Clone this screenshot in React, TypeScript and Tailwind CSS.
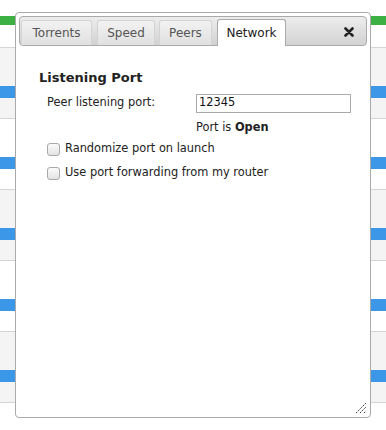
import React from 'react';

const rows = [0, 1, 2, 3, 4, 5];

function Background() {
  return (
    <div className="absolute inset-0 bg-white">
      <div className="h-[16px]" />
      <div className="h-[9px] bg-[#3cb043]" />
      <div className="h-[22px]" />
      {rows.map((i) => (
        <div
          key={i}
          className={`relative h-[71px] border-t border-[#d4d4d4] ${i % 2 === 0 ? 'bg-[#f4f4f4]' : 'bg-white'}`}
        >
          <div className="absolute left-0 right-0 top-[38px] h-[12px] bg-[#3d97e8]" />
        </div>
      ))}
    </div>
  );
}

function Tab({ label, active, width }: { label: string; active?: boolean; width: string }) {
  return (
    <div
      className={`${width} flex items-center justify-center rounded-t-[3px] border border-b-0 ${
        active
          ? 'h-[27px] bg-white border-[#aaa] text-[#212121]'
          : 'h-[25px] bg-gradient-to-b from-[#f2f2f2] to-[#e0e0e0] border-[#d3d3d3] text-[#555]'
      }`}
    >
      {label}
    </div>
  );
}

function Checkbox({ label }: { label: string }) {
  return (
    <label className="flex items-center gap-[5px] h-[24px]">
      <span className="w-[13px] h-[13px] rounded-[3px] border border-[#a9a9a9] bg-gradient-to-b from-[#fafafa] to-[#e4e4e4]" />
      <span>{label}</span>
    </label>
  );
}

export default function App() {
  return (
    <div className="relative w-[386px] h-[430px] overflow-hidden" style={{ fontFamily: '"DejaVu Sans", Verdana, sans-serif' }}>
      <Background />

      {/* dialog */}
      <div className="absolute left-[15px] top-[12px] w-[356px] h-[406px] rounded-[4px] border border-[#aaa] bg-white p-[3px] text-[12px] text-[#222]">
        {/* tab header */}
        <div className="relative h-[30px] rounded-[4px] border border-[#aaa] bg-gradient-to-b from-[#ededed] to-[#d2d2d2] flex items-end pl-[1px] text-[12px]">
          <Tab label="Torrents" width="w-[71px]" />
          <div className="ml-[5px]"><Tab label="Speed" width="w-[58px]" /></div>
          <div className="ml-[4px]"><Tab label="Peers" width="w-[53px]" /></div>
          <div className="ml-[5px] -mb-[1px]">
            <Tab label="Network" width="w-[69px]" active />
          </div>
          <svg className="absolute right-[12px] top-[10px]" width="10" height="10" viewBox="0 0 10 10">
            <path d="M1.5 1.5 L8.5 8.5 M8.5 1.5 L1.5 8.5" stroke="#222" strokeWidth="2.6" strokeLinecap="round" />
          </svg>
        </div>

        {/* content */}
        <div className="pl-[20px] pt-[23px] text-[11.4px]">
          <div className="text-[13px] font-bold text-[#222] leading-[18px]">Listening Port</div>
          <div className="pl-[8px] pt-[6px]">
            <div className="flex items-center h-[20px]">
              <span className="w-[149px]">Peer listening port:</span>
              <div className="w-[155px] h-[19px] border border-[#aaa] px-[2px] flex items-center text-[#111]">12345</div>
            </div>
            <div className="pl-[149px] pt-[5px] h-[24px] flex items-center">
              Port is&nbsp;<b>Open</b>
            </div>
            <Checkbox label="Randomize port on launch" />
            <Checkbox label="Use port forwarding from my router" />
          </div>
        </div>

        {/* resize grip */}
        <svg className="absolute right-[3px] bottom-[3px]" width="12" height="12" viewBox="0 0 12 12">
          <path d="M1 11 L11 1 M5 11 L11 5 M9 11 L11 9" stroke="#333" strokeWidth="1" strokeDasharray="1.5 1" />
        </svg>
      </div>
    </div>
  );
}
